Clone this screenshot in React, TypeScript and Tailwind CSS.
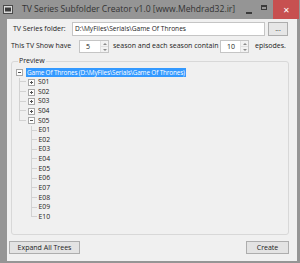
import React from 'react';

const font = { fontFamily: '"Open Sans", "Noto Sans", sans-serif' };

function Spinner({ value, width }: { value: string; width: string }) {
  return (
    <div className={`flex h-[13px] ${width} items-center border border-[#c5c5c5] bg-white`}>
      <span className="flex-1 pl-[6px] text-[7px] leading-none text-[#222]">{value}</span>
      <div className="flex h-full w-[8px] flex-col border-l border-[#e0e0e0] bg-[#f2f2f2]">
        <div className="flex flex-1 items-center justify-center border-b border-[#e0e0e0]">
          <span className="block h-0 w-0 border-x-[2px] border-b-[2px] border-x-transparent border-b-[#8a8a8a]" />
        </div>
        <div className="flex flex-1 items-center justify-center">
          <span className="block h-0 w-0 border-x-[2px] border-t-[2px] border-x-transparent border-t-[#8a8a8a]" />
        </div>
      </div>
    </div>
  );
}

function ExpandBox({ open }: { open: boolean }) {
  return (
    <svg width="7" height="7" viewBox="0 0 7 7" className="block">
      <rect x="0.5" y="0.5" width="6" height="6" fill="#fff" stroke="#a8a8a8" />
      <line x1="2" y1="3.5" x2="5" y2="3.5" stroke="#555" />
      {!open && <line x1="3.5" y1="2" x2="3.5" y2="5" stroke="#555" />}
    </svg>
  );
}

// one indent cell of the tree: vertical line (full or top half) plus a stub to the right
function Cell({ v, stub }: { v?: 'full' | 'half'; stub?: boolean }) {
  return (
    <div className="flex h-full w-[11.5px] shrink-0 flex-col">
      <div className="flex h-1/2">
        <div className={`w-[6px] ${v ? 'border-r border-[#d2d2d2]' : ''}`} />
        <div className={`w-[5.5px] ${stub ? 'border-b border-[#d2d2d2]' : ''}`} />
      </div>
      <div className="flex h-1/2">
        <div className={`w-[6px] ${v === 'full' ? 'border-r border-[#d2d2d2]' : ''}`} />
      </div>
    </div>
  );
}

function BoxCell({ open }: { open: boolean }) {
  return (
    <div className="flex h-full w-[11.5px] shrink-0 items-center justify-center">
      <ExpandBox open={open} />
    </div>
  );
}

export default function App() {
  const seasons = ['S01', 'S02', 'S03', 'S04'];
  const episodes = ['E01', 'E02', 'E03', 'E04', 'E05', 'E06', 'E07', 'E08', 'E09', 'E10'];

  return (
    <div className="flex h-[263px] w-[300px] flex-col whitespace-nowrap bg-[#959595]" style={font}>
      {/* title bar */}
      <div className="flex h-[19px] shrink-0 items-center">
        <svg width="10" height="9" viewBox="0 0 10 9" className="ml-[3px] shrink-0">
          <rect x="0.5" y="0.5" width="9" height="8" fill="#d8d8d8" stroke="#4a4a4a" />
          <rect x="2" y="2.5" width="6" height="4" fill="#3c3c3c" />
        </svg>
        <span className="ml-[9px] text-[8.6px] leading-none text-[#333]">
          TV Series Subfolder Creator v1.0 [www.Mehdrad32.ir]
        </span>
        <div className="flex-1" />
        <div className="mt-[6px] h-[2px] w-[6px] shrink-0 bg-[#3a3a3a]" />
        <div className="-mt-[4px] ml-[9px] h-[5px] w-[6px] shrink-0 border border-t-2 border-[#3a3a3a]" />
        <div className="ml-[6px] flex h-[19px] w-[26px] shrink-0 items-center justify-center self-start bg-[#c75050] text-[8px] leading-none text-white">
          ✕
        </div>
        <div className="w-[1px] shrink-0" />
      </div>

      {/* body */}
      <div className="mb-[2px] ml-[7px] mr-[3px] flex flex-1 flex-col bg-[#f0f0f0] text-[7px] text-[#222]">
        <div className="mt-[3px] flex h-[14px] items-center">
          <span className="w-[65px] pl-[6px]">TV Series folder:</span>
          <div className="flex h-full w-[193px] items-center overflow-hidden border border-[#c5c5c5] bg-white pl-[2px] text-[6.6px]">
            D:\MyFiles\Serials\Game Of Thrones
          </div>
          <div className="ml-[3px] flex h-[14px] w-[20px] items-center justify-center border border-[#adadad] bg-[#e6e6e6] text-[7px]">
            ...
          </div>
        </div>

        <div className="mt-[4px] flex h-[13px] items-center pl-[4px]">
          <span className="w-[68px]">This TV Show have</span>
          <Spinner value="5" width="w-[30px]" />
          <span className="ml-[4px] w-[107px]">season and each season contain</span>
          <Spinner value="10" width="w-[29px]" />
          <span className="ml-[6px]">episodes.</span>
        </div>

        <fieldset className="ml-[4px] mt-[3px] h-[179px] w-[278px] rounded-[3px] border border-[#d8d8d8] pl-[2px]">
          <legend className="ml-[4px] px-[1px] leading-[10px]">Preview</legend>
          <div className="mt-[2px] flex flex-col text-[6.8px] leading-none">
            <div className="flex h-[9.63px] items-center">
              <BoxCell open />
              <span className="ml-[0.5px] flex h-[9px] items-center bg-[#3399ff] px-[1px] text-[6.4px] tracking-[-0.15px] text-white">
                Game Of Thrones (D:\MyFiles\Serials\Game Of Thrones)
              </span>
            </div>
            {seasons.map((s) => (
              <div key={s} className="flex h-[9.63px] items-center">
                <Cell v="full" stub />
                <BoxCell open={false} />
                <span className="ml-[1px]">{s}</span>
              </div>
            ))}
            <div className="flex h-[9.63px] items-center">
              <Cell v="half" stub />
              <BoxCell open />
              <span className="ml-[1px]">S05</span>
            </div>
            {episodes.map((e, i) => (
              <div key={e} className="flex h-[9.63px] items-center">
                <Cell />
                <Cell v={i === episodes.length - 1 ? 'half' : 'full'} stub />
                <span className="ml-[1.5px]">{e}</span>
              </div>
            ))}
          </div>
        </fieldset>

        <div className="mt-[6px] flex items-center">
          <button className="ml-[2px] h-[13px] w-[71px] border border-[#adadad] bg-[#e3e3e3] text-[7px] leading-none text-[#222]">
            Expand All Trees
          </button>
          <div className="flex-1" />
          <button className="mr-[8px] h-[13px] w-[43px] border border-[#adadad] bg-[#e3e3e3] text-[7px] leading-none text-[#222]">
            Create
          </button>
        </div>
      </div>
    </div>
  );
}
